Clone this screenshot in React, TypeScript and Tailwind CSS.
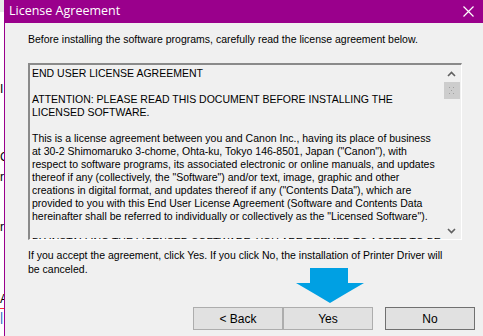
import React from 'react';

const LICENSE_LINES = [
  'END USER LICENSE AGREEMENT',
  '',
  'ATTENTION: PLEASE READ THIS DOCUMENT BEFORE INSTALLING THE',
  'LICENSED SOFTWARE.',
  '',
  'This is a license agreement between you and Canon Inc., having its place of business',
  'at 30-2 Shimomaruko 3-chome, Ohta-ku, Tokyo 146-8501, Japan ("Canon"), with',
  'respect to software programs, its associated electronic or online manuals, and updates',
  'thereof if any (collectively, the "Software") and/or text, image, graphic and other',
  'creations in digital format, and updates thereof if any ("Contents Data"), which are',
  'provided to you with this End User License Agreement (Software and Contents Data',
  'hereinafter shall be referred to individually or collectively as the "Licensed Software").',
  '',
  'BY INSTALLING THE LICENSED SOFTWARE, YOU ARE DEEMED TO AGREE TO BE BOUND BY THE',
];

function WinButton({ label }: { label: string }) {
  return (
    <button className="h-[23px] w-[90px] bg-[#e1e1e1] border border-[#adadad] text-[12px] text-black leading-none">
      {label}
    </button>
  );
}

export default function App() {
  return (
    <div className="w-[483px] h-[336px] flex bg-white overflow-hidden relative" style={{ fontFamily: '"Liberation Sans", Arial, sans-serif' }}>
      {/* fenêtre derrière */}
      <div className="w-[4px] shrink-0 bg-white overflow-hidden relative text-[12px] text-black">
        <div className="h-[12px] bg-[#e8e8e8]" />
        <div className="absolute top-[80px] left-0">I</div>
        <div className="absolute top-[148px] left-0">C</div>
        <div className="absolute top-[168px] left-0">r</div>
        <div className="absolute top-[218px] left-0">r</div>
        <div className="absolute top-[290px] left-0 border-b border-red-500">A</div>
        <div className="absolute top-[308px] left-0 text-[#0060c0]">|</div>
      </div>

      {/* DIALOGUE */}
      <div className="flex-1 flex flex-col border-l border-[#9a008c] bg-[#f0f0f0]">
        <div className="h-[23px] bg-[#9a008c] flex items-center justify-between pl-[4px] pr-[8px] text-white">
          <span className="text-[12.5px]" style={{ fontFamily: '"Open Sans", "Noto Sans", sans-serif' }}>License Agreement</span>
          <svg width="11" height="11" viewBox="0 0 11 11" className="mr-[1px]">
            <path d="M0.5 0.5 L10.5 10.5 M10.5 0.5 L0.5 10.5" stroke="white" strokeWidth="1.2" />
          </svg>
        </div>

        <div className="flex-1 flex flex-col pl-[23px] pr-[8px] text-[10.5px] text-black">
          <p className="mt-[9px] leading-[14px]">Before installing the software programs, carefully read the license agreement below.</p>

          {/* zone de texte */}
          <div className="mt-[17px] w-[434px] h-[177px] flex border-t-2 border-l-2 border-t-[#8a8a8a] border-l-[#8a8a8a] border-r border-b border-r-white border-b-white">
            <div className="flex-1 overflow-hidden pl-[2px] pt-[2px]">
              {LICENSE_LINES.map((l, i) => (
                <div key={i} className="h-[13px] leading-[13px] whitespace-nowrap">{l}</div>
              ))}
            </div>
            <div className="w-[17px] shrink-0 flex flex-col items-center bg-[#f0f0f0] mr-[1px]">
              <div className="h-[17px] flex items-center justify-center">
                <svg width="9" height="6" viewBox="0 0 9 6"><path d="M1 5 L4.5 1.5 L8 5" stroke="#606060" strokeWidth="1.6" fill="none" /></svg>
              </div>
              <div className="w-[16px] h-[17px] bg-[#cdcdcd] relative">
                <span className="absolute left-[5px] top-[5px] w-px h-px bg-[#a0a0a0]" />
                <span className="absolute left-[9px] top-[5px] w-px h-px bg-[#a0a0a0]" />
                <span className="absolute left-[7px] top-[8px] w-px h-px bg-[#a0a0a0]" />
                <span className="absolute left-[5px] top-[11px] w-px h-px bg-[#a0a0a0]" />
                <span className="absolute left-[9px] top-[11px] w-px h-px bg-[#a0a0a0]" />
              </div>
              <div className="flex-1" />
              <div className="h-[17px] flex items-center justify-center">
                <svg width="9" height="6" viewBox="0 0 9 6"><path d="M1 1 L4.5 4.5 L8 1" stroke="#606060" strokeWidth="1.6" fill="none" /></svg>
              </div>
            </div>
          </div>

          <p className="mt-[8px] leading-[14px] w-[425px]">
            If you accept the agreement, click Yes. If you click No, the installation of Printer Driver will be canceled.
          </p>

          <div className="mt-auto mb-[6px] flex justify-end">
            <WinButton label="< Back" />
            <WinButton label="Yes" />
            <div className="w-[12px]" />
            <button className="h-[23px] w-[90px] bg-[#e1e1e1] border border-[#707070] text-[12px] leading-none">No</button>
          </div>
        </div>
      </div>

      {/* flèche bleue */}
      <svg className="absolute left-[295px] top-[268px]" width="70" height="36" viewBox="0 0 70 36">
        <path d="M15 0 H53 V15 H69 Q50 26 35 35 Q20 26 1 15 H15 Z" fill="#00a0e3" />
      </svg>
    </div>
  );
}
